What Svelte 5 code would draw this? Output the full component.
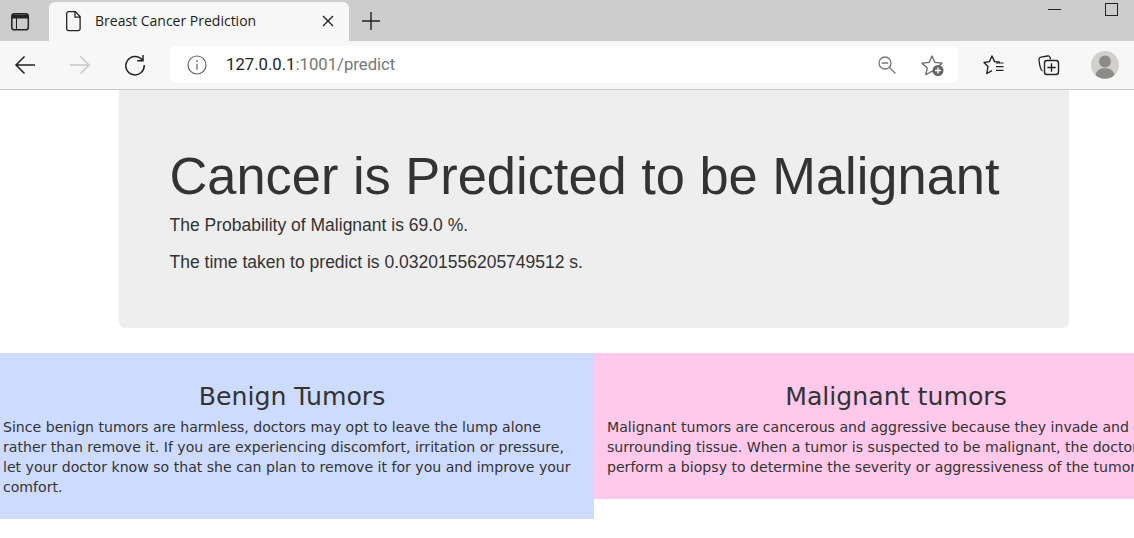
<script>
  const tabTitle = 'Breast Cancer Prediction';
  const probability = '69.0';
  const elapsed = '0.03201556205749512';
</script>

<div class="browser">
  <div class="tabstrip">
    <svg class="tabs-btn" width="20" height="20" viewBox="0 0 20 20">
      <rect x="1.800" y="2.800" width="16.500" height="16" rx="2.600" fill="none" stroke="#222" stroke-width="1.500"/>
      <path d="M2 3.500h16v4H7v11H6V7.500H2z" fill="#222"/>
    </svg>
    <div class="tab">
      <svg width="18" height="22" viewBox="0 0 18 22">
        <path d="M3.500 1.600h6.800l4.800 5v12.200a1.800 1.800 0 0 1-1.800 1.800H3.500a1.800 1.800 0 0 1-1.800-1.800V3.400a1.800 1.800 0 0 1 1.800-1.800zM10 1.800v5.400h5" fill="none" stroke="#222" stroke-width="1.300"/>
      </svg>
      <span class="tab-title">{tabTitle}</span>
      <svg class="tab-close" width="12" height="12" viewBox="0 0 12 12">
        <path d="M1 1l10 10M11 1L1 11" stroke="#222" stroke-width="1.400"/>
      </svg>
    </div>
    <svg class="new-tab" width="18" height="18" viewBox="0 0 18 18">
      <path d="M9 0v18M0 9h18" stroke="#222" stroke-width="1.400"/>
    </svg>
    <div class="window-btns">
      <span class="minimize"></span>
      <span class="maximize"></span>
    </div>
  </div>

  <div class="toolbar">
    <svg class="nav back" width="22" height="20" viewBox="0 0 22 20">
      <path d="M21 10H2M10.500 1.500L2 10l8.500 8.500" fill="none" stroke="#222" stroke-width="1.500"/>
    </svg>
    <svg class="nav forward" width="22" height="20" viewBox="0 0 22 20">
      <path d="M1 10h19M11.500 1.500L20 10l-8.500 8.500" fill="none" stroke="#c8c8c8" stroke-width="1.500"/>
    </svg>
    <svg class="nav reload" width="22" height="22" viewBox="0 0 22 22">
      <path d="M18.400 6.200A9.200 9.200 0 1 0 20.200 11M19 1v5.800h-5.800" fill="none" stroke="#222" stroke-width="1.500"/>
    </svg>
    <div class="address">
      <svg width="20" height="20" viewBox="0 0 20 20">
        <circle cx="10" cy="10" r="9" fill="none" stroke="#666" stroke-width="1.200"/>
        <path d="M10 8.800v6" stroke="#666" stroke-width="1.300"/>
        <circle cx="10" cy="5.900" r="0.900" fill="#666"/>
      </svg>
      <span class="url"><b>127.0.0.1</b>:1001/predict</span>
      <svg class="zoom-out" width="18" height="18" viewBox="0 0 18 18">
        <circle cx="7" cy="7" r="6" fill="none" stroke="#777" stroke-width="1.300"/>
        <path d="M3.800 7h6.400M11.300 11.300L17.500 17.500" stroke="#777" stroke-width="1.300"/>
      </svg>
      <svg class="star-add" width="24" height="22" viewBox="0 0 24 22">
        <path d="M11 2l2.900 6.400 7.100.8-5.300 4.700 1.500 6.900-6.200-3.500-6.200 3.500 1.500-6.900L1 9.200l7.100-.8z" fill="none" stroke="#666" stroke-width="1.300" stroke-linejoin="round"/>
        <circle cx="17" cy="16.500" r="5.500" fill="#666"/>
        <path d="M17 13.500v6M14 16.500h6" stroke="#fff" stroke-width="1.400"/>
      </svg>
    </div>
    <svg class="fav" width="22" height="20" viewBox="0 0 22 20">
      <path d="M17 7.200l-5.400-.6L9 1 6.400 6.600 1 7.500l4 4-1.200 7 5.200-2.900" fill="none" stroke="#222" stroke-width="1.400" stroke-linejoin="round"/>
      <path d="M13 8h7.500M13 11.700h7.500M13 15.400h7.500" stroke="#222" stroke-width="1.200"/>
    </svg>
    <svg class="collections" width="22" height="22" viewBox="0 0 22 22">
      <path d="M4.500 17C2.500 16 1.300 9 1 6c-.2-1.500.5-2.600 2-2.900l6.500-1.100c1.300-.2 2.200.3 2.600 1.500l.4 2" fill="none" stroke="#222" stroke-width="1.300"/>
      <rect x="6.500" y="6.500" width="14" height="14" rx="2.500" fill="#f7f7f7" stroke="#222" stroke-width="1.400"/>
      <path d="M13.500 9.300v8.400M9.300 13.500h8.400" stroke="#222" stroke-width="1.400"/>
    </svg>
    <svg class="avatar" width="28" height="28" viewBox="0 0 28 28">
      <circle cx="14" cy="14" r="14" fill="#d2d0cc"/>
      <circle cx="14" cy="10.500" r="6" fill="#8d8b88"/>
      <path d="M4.500 24c1-5 5-6.800 9.500-6.800s8.500 1.800 9.500 6.800a14 14 0 0 1-19 0z" fill="#8d8b88"/>
    </svg>
  </div>
</div>

<main class="page">
  <section class="jumbotron">
    <h1>Cancer is Predicted to be Malignant</h1>
    <p>The Probability of Malignant is {probability} %.</p>
    <p>The time taken to predict is {elapsed} s.</p>
  </section>

  <div class="row">
    <div class="col benign">
      <h3>Benign Tumors</h3>
      <p>Since benign tumors are harmless, doctors may opt to leave the lump alone rather than remove it. If you are experiencing discomfort, irritation or pressure, let your doctor know so that she can plan to remove it for you and improve your comfort.</p>
    </div>
    <div class="col malignant">
      <h3>Malignant tumors</h3>
      <p>Malignant tumors are cancerous and aggressive because they invade and destroy surrounding tissue. When a tumor is suspected to be malignant, the doctor will perform a biopsy to determine the severity or aggressiveness of the tumor.</p>
    </div>
  </div>
</main>

<style>
:global(html), :global(body) {
  margin: 0;
  height: 100%;
  overflow: hidden;
  background: #fff;
}

.browser {
  font-family: "Open Sans", "Noto Sans", sans-serif;
}

/* tab strip */
.tabstrip {
  height: 41px;
  background: #cdcdcd;
  display: flex;
  align-items: flex-end;
  box-sizing: border-box;
}

.tabs-btn {
  margin: 0 19px 10px 10px;
}

.tab {
  width: 300px;
  height: 39px;
  box-sizing: border-box;
  background: #f7f7f7;
  border-radius: 6px 6px 0 0;
  display: flex;
  align-items: center;
  padding: 0 15px 2px 16px;
}

.tab-title {
  margin-left: 12px;
  font-size: 14px;
  color: #222;
  white-space: nowrap;
}

.tab-close {
  margin-left: auto;
}

.new-tab {
  margin: 0 0 11px 13px;
}

.window-btns {
  margin-left: auto;
  align-self: flex-start;
  display: flex;
  padding: 3px 16px 0 0;
}

.minimize {
  width: 13px;
  height: 1px;
  background: #222;
  margin: 6px 44px 0 0;
}

.maximize {
  width: 11px;
  height: 11px;
  border: 1px solid #222;
}

/* toolbar */
.toolbar {
  height: 49px;
  box-sizing: border-box;
  background: #f7f7f7;
  border-bottom: 1px solid #c9c9c9;
  padding-bottom: 1px;
  display: flex;
  align-items: center;
}

.nav {
  flex: none;
}

.back { margin-left: 14px; }
.forward { margin-left: 33px; }
.reload { margin-left: 33px; }

.address {
  width: 788px;
  height: 37px;
  margin-left: 24px;
  background: #fff;
  border-radius: 6px;
  display: flex;
  align-items: center;
  box-sizing: border-box;
  padding: 0 13px 0 17px;
}

.url {
  margin-left: 19px;
  font-family: Roboto, sans-serif;
  font-size: 16.700px;
  color: #767676;
}

.url b {
  font-weight: 400;
  color: #222;
}

.zoom-out { margin-left: auto; margin-right: -1px; }
.star-add { margin-left: 26px; }
.fav { margin-left: 25px; }
.collections { margin-left: 33px; }
.avatar { margin-left: 31px; }

/* page */
.page {
  font-family: "Liberation Sans", Arial, sans-serif;
  color: #333;
  overflow: hidden;
}

.jumbotron {
  width: 950px;
  height: 238px;
  box-sizing: border-box;
  margin: 0 0 25px 119px;
  padding: 58px 50.500px 0;
  background: #eee;
  border-radius: 0 0 6px 6px;
}

.jumbotron h1 {
  margin: 0 0 8px;
  font-size: 52.400px;
  font-weight: 400;
  line-height: 1.1;
  white-space: nowrap;
}

.jumbotron p {
  margin: 0 0 15px;
  font-size: 17.500px;
  line-height: 22px;
}

.row {
  display: grid;
  grid-template-columns: 604px 604px;
  width: 1208px;
  margin-left: -10px;
  align-items: start;
  font-family: "DejaVu Sans", Verdana, sans-serif;
}

.col {
  padding: 20px 8px 22px 13px;
  box-sizing: border-box;
}

.benign { background: #ccdbff; }
.malignant { background: #ffc9ec; }

.col h3 {
  margin: 0 0 6px;
  padding: 10px 5px 0 0;
  font-size: 25.200px;
  font-weight: 400;
  line-height: 28px;
  text-align: center;
}

.col p {
  margin: 0;
  font-size: 14.100px;
  line-height: 20px;
}
</style>
